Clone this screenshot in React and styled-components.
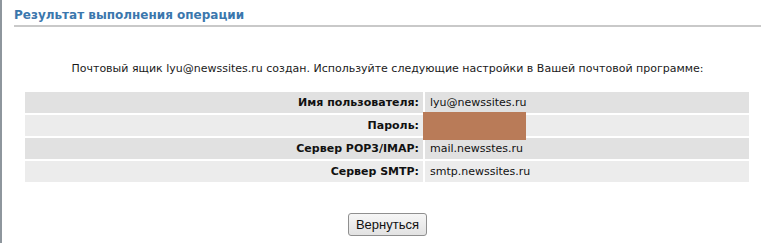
import React from "react";
import styled, { createGlobalStyle } from "styled-components";

const Global = createGlobalStyle`
  html, body { margin: 0; padding: 0; background: #ffffff; }
  body { font-family: "DejaVu Sans", Verdana, sans-serif; }
`;

const Frame = styled.div`
  border-left: 2px solid #8e969d;
  min-height: 243px;
  box-sizing: border-box;
  padding: 0 8px 0 12px;
`;

const Title = styled.h2`
  margin: 0;
  padding: 8px 0 3px;
  font-size: 12px;
  line-height: 14px;
  font-weight: bold;
  color: #3b77ad;
  border-bottom: 2px solid #c9c9c9;
`;

const Message = styled.p`
  margin: 35px 0 0;
  font-size: 11px;
  line-height: 14px;
  color: #1a1a1a;
  text-align: center;
`;

const Table = styled.table`
  width: 728px;
  margin: 14px 0 0 9px;
  border-collapse: separate;
  border-spacing: 2px;
  font-size: 11px;
  color: #111;
`;

const Row = styled.tr`
  background: ${(p) => (p.$odd ? "#e1e1e1" : "#ececec")};
`;

const Label = styled.td`
  width: 398px;
  height: 21px;
  padding: 0 4px 0 0;
  text-align: right;
  font-weight: bold;
  box-sizing: border-box;
`;

const Value = styled.td`
  height: 21px;
  padding: 0 0 0 5px;
  text-align: left;
  position: relative;
`;

const Redaction = styled.div`
  position: absolute;
  left: -2px;
  top: -3px;
  width: 103px;
  height: 28px;
  background: #b97b58;
`;

const Actions = styled.div`
  display: flex;
  justify-content: center;
  margin-top: 29px;
`;

const Button = styled.button`
  width: 79px;
  height: 23px;
  font-family: "Liberation Sans", Arial, sans-serif;
  font-size: 13px;
  color: #111;
  background: linear-gradient(#f6f6f6, #e2e2e2);
  border: 1px solid #8f8f8f;
  border-radius: 3px;
  padding: 0;
`;

const rows = [
  { label: "Имя пользователя:", value: "lyu@newssites.ru" },
  { label: "Пароль:", value: "", hidden: true },
  { label: "Сервер POP3/IMAP:", value: "mail.newsstes.ru" },
  { label: "Сервер SMTP:", value: "smtp.newssites.ru" },
];

export default function App() {
  return (
    <>
      <Global />
      <Frame>
        <Title>Результат выполнения операции</Title>
        <Message>
          Почтовый ящик lyu@newssites.ru создан. Используйте следующие настройки в Вашей почтовой программе:
        </Message>
        <Table>
          <tbody>
            {rows.map((r, i) => (
              <Row key={r.label} $odd={i % 2 === 0}>
                <Label>{r.label}</Label>
                <Value>
                  {r.value}
                  {r.hidden && <Redaction />}
                </Value>
              </Row>
            ))}
          </tbody>
        </Table>
        <Actions>
          <Button>Вернуться</Button>
        </Actions>
      </Frame>
    </>
  );
}
